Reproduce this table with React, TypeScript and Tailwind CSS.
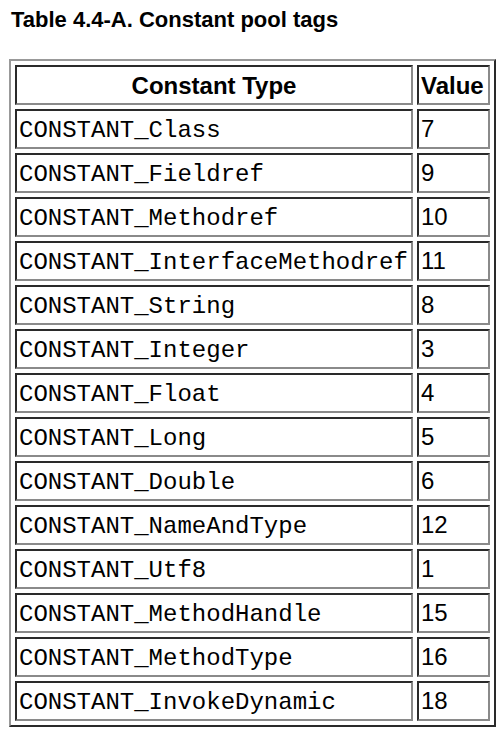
const rows: [string, number][] = [
  ["CONSTANT_Class", 7],
  ["CONSTANT_Fieldref", 9],
  ["CONSTANT_Methodref", 10],
  ["CONSTANT_InterfaceMethodref", 11],
  ["CONSTANT_String", 8],
  ["CONSTANT_Integer", 3],
  ["CONSTANT_Float", 4],
  ["CONSTANT_Long", 5],
  ["CONSTANT_Double", 6],
  ["CONSTANT_NameAndType", 12],
  ["CONSTANT_Utf8", 1],
  ["CONSTANT_MethodHandle", 15],
  ["CONSTANT_MethodType", 16],
  ["CONSTANT_InvokeDynamic", 18],
];

// inset cell border: dark top/left, gray bottom/right
const cell =
  "border-2 border-solid border-t-[#2a2a2a] border-l-[#2a2a2a] border-r-[#8a8a8a] border-b-[#8a8a8a] px-0.5 py-0 align-top text-[24px]";

export default function App() {
  return (
    <div className="min-h-screen bg-white font-['Liberation_Sans',Arial,sans-serif] text-black">
      <h1 className="pl-[11px] pt-[7px] text-[22px] leading-[25px] font-bold">
        Table 4.4-A. Constant pool tags
      </h1>
      <table className="ml-[9px] mt-[27px] w-[487px] table-fixed border-separate border-spacing-[4px] border-2 border-solid border-t-[#999] border-l-[#999] border-r-[#2a2a2a] border-b-[#2a2a2a]">
        <thead>
          <tr>
            <th className={`${cell} w-[398px] text-center font-bold`}>
              <div className="h-[36px] leading-[38px]">Constant Type</div>
            </th>
            <th className={`${cell} w-[73px] text-left font-bold`}>
              <div className="h-[36px] leading-[38px]">Value</div>
            </th>
          </tr>
        </thead>
        <tbody>
          {rows.map(([name, value]) => (
            <tr key={name}>
              <td className={`${cell} font-['Liberation_Mono','Courier_New',monospace]`}>
                <div className="h-[36px] leading-[40px]">{name}</div>
              </td>
              <td className={cell}>
                <div className="h-[36px] leading-[36px]">{value}</div>
              </td>
            </tr>
          ))}
        </tbody>
      </table>
    </div>
  );
}
